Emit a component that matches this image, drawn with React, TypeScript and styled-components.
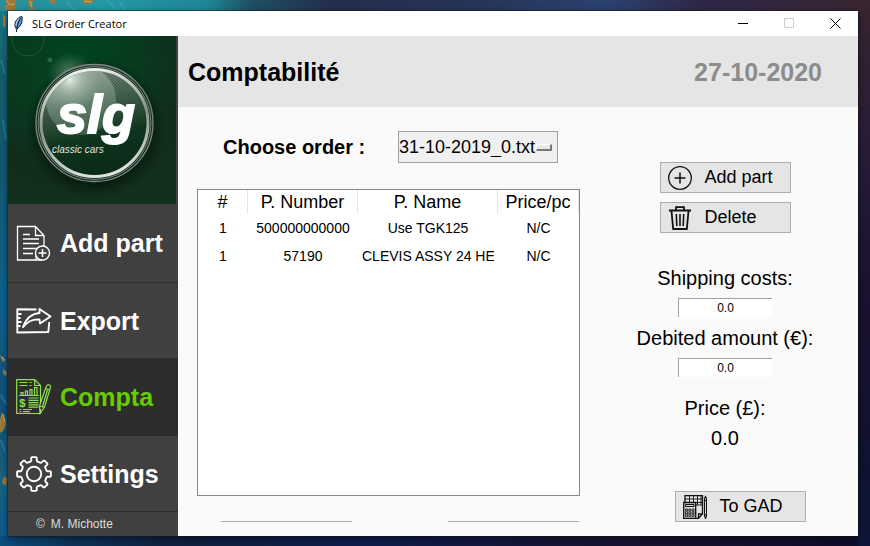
import React, { useState } from 'react';
import styled, { createGlobalStyle } from 'styled-components';

const GlobalStyle = createGlobalStyle`
  *, *::before, *::after { box-sizing: border-box; }
  body {
    margin: 0;
    font-family: "Liberation Sans", Arial, sans-serif;
    color: #000;
  }
  button, input, select { font: inherit; color: inherit; margin: 0; }
`;

/* ---------- desktop and window frame ---------- */

const Desktop = styled.div`
  position: relative;
  display: flex;
  min-height: 100vh;
  padding: 11px 12px 10px 8px;
  background:
    linear-gradient(180deg, transparent 60%, #0d1638 100%) right / 12px 100% no-repeat,
    linear-gradient(180deg, #38252f 0%, #2a1d38 25%, #1a1230 55%, #120e28 100%) right / 12px 100% no-repeat,
    linear-gradient(90deg, #2b8f98 0%, #249aa4 12%, #1f8796 24%, #1f4f62 29%, #232f4c 38%, #27355a 55%, #2c426f 70%, #30284a 80%, #38252f 100%) top / 100% 11px no-repeat,
    linear-gradient(90deg, #0b4f80 0%, #0c3358 8%, #10203f 20%, #0d1c4c 42%, #14163a 60%, #17122e 75%, #0e0c2a 100%) bottom / 100% 10px no-repeat,
    linear-gradient(180deg, #1c7f8c 0%, #15606e 12%, #135a74 30%, #0f6490 55%, #12507a 75%, #1a6482 88%, #0b5a94 100%);
`;

const Speckles = styled.svg`
  position: absolute;
  top: 0;
  left: 0;
  pointer-events: none;
`;

const Window = styled.div`
  position: relative;
  flex: 1;
  display: flex;
  flex-direction: column;
  min-width: 0;
  background: #fafafa;
  box-shadow: 0 0 0 1px rgba(20, 24, 30, 0.45), 0 2px 8px rgba(0, 0, 0, 0.5);
`;

const TitleBar = styled.div`
  display: flex;
  align-items: center;
  height: 25px;
  padding-left: 3px;
  background: #fff;
`;

const WindowTitle = styled.span`
  flex: 1;
  padding-left: 5px;
  font-family: "Open Sans", "Noto Sans", sans-serif;
  font-size: 11px;
  line-height: 24px;
`;

const WindowButton = styled.button`
  display: flex;
  align-items: center;
  justify-content: center;
  width: 46px;
  height: 25px;
  padding: 0;
  border: 0;
  background: none;
`;

const Columns = styled.div`
  flex: 1;
  display: flex;
`;

/* ---------- sidebar ---------- */

const Sidebar = styled.aside`
  display: flex;
  flex-direction: column;
  flex: none;
  width: 170px;
  background: #404040;
`;

const Nav = styled.nav`
  flex: 1;
  display: grid;
  grid-template-rows: 79fr 76fr 77fr 76fr;
`;

const NavButton = styled.button<{ $active?: boolean }>`
  display: flex;
  align-items: center;
  gap: 8px;
  padding: 0 0 0 8px;
  border: 0;
  border-bottom: 1px solid #2d2d2d;
  background: ${(p) => (p.$active ? '#2d2d2d' : '#404040')};
  color: ${(p) => (p.$active ? '#66cc00' : '#fff')};
  font-size: 25px;
  font-weight: bold;
  line-height: 28px;
  text-align: left;
  white-space: nowrap;
`;

const Credit = styled.footer`
  display: flex;
  gap: 6px;
  padding-left: 28px;
  color: #dcdcdc;
  font-size: 12px;
  line-height: 24px;
`;

/* ---------- main area ---------- */

const Main = styled.main`
  flex: 1;
  display: flex;
  flex-direction: column;
  min-width: 0;
`;

const Header = styled.header`
  display: flex;
  align-items: center;
  justify-content: space-between;
  height: 71px;
  padding: 2px 36px 0 10px;
  background: #e5e5e5;
  font-size: 25px;
`;

const Heading = styled.h1`
  margin: 0;
  font-size: inherit;
`;

const Today = styled.time`
  color: #8c8c8c;
  font-weight: bold;
`;

const Body = styled.div`
  flex: 1;
  display: grid;
  grid-template-columns: 383fr 278fr;
  padding: 24px 0 14px 19px;
`;

const Orders = styled.section`
  display: flex;
  flex-direction: column;
  min-width: 0;
`;

const ChooseRow = styled.div`
  display: flex;
  align-items: center;
  justify-content: space-between;
  padding: 0 22px 0 26px;
`;

const ChooseLabel = styled.label`
  font-size: 20px;
  font-weight: bold;
`;

const SelectBox = styled.div`
  position: relative;
  width: 160px;
  &::after {
    content: '';
    position: absolute;
    right: 6px;
    top: 13px;
    width: 16px;
    height: 7px;
    border: 1px solid #fff;
    border-right: 2px solid #777;
    border-bottom: 2px solid #777;
    background: #e8e8e8;
    pointer-events: none;
  }
`;

const Select = styled.select`
  appearance: none;
  display: block;
  width: 100%;
  height: 32px;
  padding: 0 20px 0 0;
  border: 1px solid #a0a0a0;
  border-radius: 0;
  background: #f0f0f0;
  font-size: 18px;
`;

const TableFrame = styled.div`
  flex: 1;
  margin: 26px 0 25px;
  border: 1px solid #828790;
  background: #fff;
`;

const Table = styled.table`
  width: 100%;
  border-collapse: separate;
  border-spacing: 0;
  table-layout: fixed;
`;

const Col = styled.col<{ $width?: number }>`
  width: ${(p) => (p.$width ? `${p.$width}px` : 'auto')};
`;

const Th = styled.th`
  height: 24px;
  padding: 0;
  border-right: 1px solid #e5e5e5;
  font-size: 18px;
  font-weight: normal;
  line-height: 24px;
  white-space: nowrap;
`;

const Td = styled.td`
  height: 28px;
  padding: 0 4px;
  font-size: 14px;
  line-height: 28px;
  text-align: center;
`;

const CellText = styled.div`
  overflow: hidden;
  white-space: nowrap;
`;

const Rules = styled.div`
  display: flex;
  justify-content: space-between;
  padding: 0 1px 0 24px;
`;

const Rule = styled.div`
  width: 131px;
  height: 1px;
  background: #adadad;
`;

const Side = styled.section`
  display: flex;
  flex-direction: column;
  align-items: center;
  padding: 31px 0 0 12px;
`;

const ButtonStack = styled.div`
  display: grid;
  gap: 9px;
  margin-bottom: 33px;
`;

const ActionButton = styled.button`
  display: flex;
  align-items: center;
  gap: 13px;
  width: 131px;
  height: 31px;
  padding: 0 0 0 7px;
  border: 1px solid #adadad;
  background: #e5e5e5;
  font-size: 18px;
  white-space: nowrap;
`;

const ExportSlot = styled.div`
  margin-top: auto;
  padding-left: 30px;
`;

const Field = styled.div`
  display: flex;
  flex-direction: column;
  align-items: center;
  gap: 8px;
  margin-bottom: 9px;
`;

const FieldLabel = styled.label`
  font-size: 20px;
  line-height: 24px;
`;

const FieldInput = styled.input`
  width: 94px;
  height: 19px;
  padding: 0;
  border: 0 solid #a0a0a0;
  border-width: 1px 0 0 1px;
  background: #fff;
  font-size: 12px;
  text-align: center;
`;

const Total = styled.div`
  display: grid;
  gap: 6px;
  margin-top: 10px;
  font-size: 20px;
  line-height: 24px;
  text-align: center;
`;

/* ---------- drawings ---------- */

const Wallpaper = () => (
  <Speckles width="180" height="546" viewBox="0 0 180 546" aria-hidden="true">
    <g fill="#a07a3a">
      <path d="M5 0h11l-1 4 1 5-4 2-6-1-2-3 3-3z" />
      <path d="M28 0h5l-1 4 2 6-3 1-2-5z" />
      <path d="M49 0h5l3 3-5 1zM82 0h12l-2 3-8 1z" />
      <path d="M3 14l3 3-1 5 1 4-3 2v-7z" />
      <path d="M0 355l4 3 1 4-3-1zM3 369l4 3-1 4-3-2z" />
      <path d="M2 412l3 6 1 7-3 6-3 2v-14zM4 476l3 3-1 7-4-3z" />
    </g>
    <g stroke="#d8b56a" fill="none" opacity=".8">
      <path d="M7 1l3 4 5-1M30 1l2 6M84 1l8 1M1 357l4 3M3 414l2 8" />
    </g>
    <g stroke="#4cb8c0" fill="none" strokeWidth="2" opacity=".3">
      <path d="M66 1l8 9M108 0l8 10M120 2l4 8M1 60l4 14M3 120l3 20M1 395l5 9M1 440l4 12" />
    </g>
  </Speckles>
);

const FeatherIcon = () => (
  <svg width="16" height="18" viewBox="0 0 16 18" aria-hidden="true">
    <path d="M5.500 14C2.500 11 4 6 7 3.500 8.500 2 10 1.500 11 1.500c.5 3 0 6-1.500 8.500C8.500 12 7.500 13 5.500 14z" fill="#5b93d4" stroke="#172136" />
    <path d="M9.500 3C7 7 6 11 5.500 17" fill="none" stroke="#111" />
    <path d="M8.500 3C6 6 5 8 5 11" fill="none" stroke="#b8d4ee" />
  </svg>
);

const Logo = () => (
  <svg width="168" height="168" viewBox="0 0 168 168" role="img" aria-label="SLG classic cars">
    <defs>
      <radialGradient id="field" cx="40%" cy="15%" r="85%">
        <stop offset="0" stopColor="#00451f" />
        <stop offset=".45" stopColor="#083a1e" />
        <stop offset=".8" stopColor="#122c1a" />
        <stop offset="1" stopColor="#12301c" />
      </radialGradient>
      <linearGradient id="ball" x1=".35" y1="0" x2=".55" y2="1">
        <stop offset="0" stopColor="#74897a" />
        <stop offset=".35" stopColor="#3d5e48" />
        <stop offset=".65" stopColor="#10381f" />
        <stop offset="1" stopColor="#0a2c18" />
      </linearGradient>
      <linearGradient id="ring" x1=".3" y1="0" x2=".5" y2="1">
        <stop offset="0" stopColor="#f2f5f2" />
        <stop offset=".5" stopColor="#87918a" />
        <stop offset="1" stopColor="#dfe3df" />
      </linearGradient>
      <radialGradient id="flare">
        <stop offset="0" stopColor="#e4eee6" stopOpacity=".95" />
        <stop offset=".4" stopColor="#b9cbbb" stopOpacity=".55" />
        <stop offset="1" stopColor="#8fa894" stopOpacity="0" />
      </radialGradient>
      <radialGradient id="shade">
        <stop offset=".8" stopColor="#04140a" stopOpacity=".6" />
        <stop offset="1" stopColor="#04140a" stopOpacity="0" />
      </radialGradient>
      <linearGradient id="bubble" x1="0" y1="0" x2=".3" y2="1">
        <stop offset="0" stopColor="#c3d2c5" stopOpacity=".6" />
        <stop offset="1" stopColor="#7f9c86" stopOpacity=".35" />
      </linearGradient>
      <pattern id="weave" width="3" height="3" patternUnits="userSpaceOnUse">
        <path d="M0 3L3 0" stroke="#000" strokeOpacity=".2" />
      </pattern>
      <clipPath id="disc"><circle cx="86.500" cy="87" r="52" /></clipPath>
    </defs>
    <rect width="168" height="168" fill="url(#field)" />
    <circle cx="20" cy="4" r="16" fill="none" stroke="#2c6b42" strokeOpacity=".6" />
    <circle cx="42" cy="24" r="2.500" fill="#2f6040" />
    <circle cx="87" cy="92" r="70" fill="url(#shade)" />
    <circle cx="62" cy="39" r="23" fill="url(#flare)" opacity=".5" />
    <circle cx="86.500" cy="87" r="58.500" fill="#102a19" stroke="#7f8c83" strokeWidth="1.300" />
    <circle cx="86.500" cy="87" r="56.500" fill="none" stroke="#98a39b" strokeWidth=".8" />
    <circle cx="86.500" cy="87" r="53.500" fill="url(#ball)" stroke="url(#ring)" strokeWidth="3" />
    <g clipPath="url(#disc)">
      <circle cx="86.500" cy="87" r="52" fill="url(#weave)" />
      <circle cx="73" cy="64" r="35" fill="url(#bubble)" />
      <circle cx="62" cy="44" r="32" fill="url(#flare)" />
    </g>
    <g fill="#fff" fontFamily="'Liberation Sans', Arial, sans-serif" fontStyle="italic">
      <text x="49" y="97" fontSize="54" fontWeight="bold" stroke="#fff" strokeWidth="2">slg</text>
      <text x="44" y="117" fontSize="10" fill="#dfe6e0">classic cars</text>
    </g>
  </svg>
);

const AddPageIcon = () => (
  <svg width="36" height="36" viewBox="0 0 36 36" fill="none" stroke="currentColor" aria-hidden="true">
    <path d="M20 28.500V35H1.500V1.500h18l8.500 9V21M19.500 1.500v9H28M20 35h6" strokeWidth="1.300" />
    <path d="M7 9.500h7M7 14h16M7 18.500h16M7 23.500h15M7 28.500h10" strokeWidth="1.300" />
    <circle cx="26.500" cy="28" r="7" fill="#404040" strokeWidth="1.400" />
    <path d="M26.500 24v8M22.500 28h8" strokeWidth="1.500" />
  </svg>
);

const ShareIcon = () => (
  <svg width="36" height="26" viewBox="0 0 36 26" fill="none" stroke="currentColor" strokeWidth="1.900" strokeLinejoin="round" aria-hidden="true">
    <path d="M20.500 1.500L1.300 1.200v23.300l31-.5 1-10M1 6h4.500M1 10h3.500M1 14h4.500M1 18h3.500" />
    <path d="M7 19C10 11 15 5.500 23.500 5V1l11 7.500-10.500 7-.500-4C16 11 12 13.500 7 19z" />
  </svg>
);

const ReportIcon = () => (
  <svg width="36" height="36" viewBox="0 0 36 36" fill="none" stroke="#8fe055" strokeWidth="1.200" aria-hidden="true">
    <path d="M24.500 30v4.500H.7V.7h18l5.800 5.800V24M18.700.7v5.800h5.800" />
    <path d="M3.500 3.500h8M3.500 6.500h8M13.500 3.500h2M13.500 6.500h2M3 16.500h20" />
    <path d="M5 16v-2.500h2V16M9.500 16v-4h2v4M14 16v-5.500h2V16M18.500 16V8.500h2.500V16" />
    <path d="M12.500 19h10M12.500 21.300h10M12.500 23.600h10M12.500 25.900h10M12.500 28.200h10M3.500 30.500h2M7 30.500h9M3.500 32.700h2M7 32.700h7" />
    <path d="M30 8l1-1.500c1-1.500 4-.5 3.500 1.500l-.5 2-5.500 18-4.500 6.500-.5-7.500zM29.500 9.500l4.500 1.500M24 27l4.500 1.500M31.500 11l-5 16.500" />
    <text x="3.200" y="28" fontSize="11" fontWeight="bold" fill="#8fe055" stroke="none">$</text>
  </svg>
);

const gearPath = (() => {
  const points: string[] = [];
  for (let i = 0; i < 8; i += 1) {
    const mid = (i * Math.PI) / 4 - Math.PI / 2;
    [[-0.28, 12.9], [-0.2, 13.6], [-0.17, 16.4], [-0.12, 17], [0.12, 17], [0.17, 16.4], [0.2, 13.6], [0.28, 12.9]].forEach(([a, r]) => {
      points.push(`${(18 + r * Math.cos(mid + a)).toFixed(2)} ${(18 + r * Math.sin(mid + a)).toFixed(2)}`);
    });
  }
  return `M${points.join('L')}Z`;
})();

const GearIcon = () => (
  <svg width="36" height="36" viewBox="0 0 36 36" fill="none" stroke="currentColor" strokeWidth="1.900" strokeLinejoin="round" aria-hidden="true">
    <path d={gearPath} />
    <circle cx="18" cy="18" r="7.200" />
  </svg>
);

const PlusIcon = () => (
  <svg width="24" height="24" viewBox="0 0 24 24" fill="none" stroke="#111" aria-hidden="true">
    <circle cx="12" cy="12" r="11.300" strokeWidth="1.300" />
    <path d="M12 6.500v11M6.500 12h11" strokeWidth="1.500" />
  </svg>
);

const TrashIcon = () => (
  <svg width="24" height="24" viewBox="0 0 24 24" fill="none" stroke="#111" aria-hidden="true">
    <path d="M1 4.500h22M8 4V1.200h8V4" strokeWidth="1.800" />
    <path d="M3.500 5l1.700 18h13.600l1.700-18" strokeWidth="1.800" />
    <path d="M8.300 8l.5 12M12 8v12M15.700 8l-.5 12" strokeWidth="1.600" />
  </svg>
);

const LedgerIcon = () => (
  <svg width="24" height="24" viewBox="0 0 24 24" fill="none" stroke="#111" aria-hidden="true">
    <path d="M2 7V.7h17.500V19l-4 4.300H13M15.500 23v-4h4" strokeWidth="1.300" />
    <path d="M2 4h17M6.500 1v6M10.500 1v6M14.500 1v9M18 1v9M12 7.500h7M13 10h6" strokeWidth=".9" />
    <path d="M.7 7.500h12v15.800H.7z" strokeWidth="1.300" fill="#d6d6d6" />
    <path d="M2.500 9.500h8.500v2H2.500z" />
    <path d="M2.500 14h2v2h-2zM5.800 14h2v2h-2zM9.100 14h2v2h-2zM2.500 16.800h2v2h-2zM5.800 16.800h2v2h-2zM9.100 16.800h2v2h-2zM2.500 19.600h2v2h-2zM5.800 19.600h2v2h-2zM9.100 19.600h2v2h-2z" strokeWidth=".8" />
    <path d="M21.500 3.500L22.500 1.500l1 2V21l-1 2.500-1-2.500zM21.500 5.500h2M21.500 20h2" strokeWidth="1.100" />
  </svg>
);

/* ---------- page ---------- */

const sections = [
  { name: 'Add part', icon: <AddPageIcon /> },
  { name: 'Export', icon: <ShareIcon /> },
  { name: 'Compta', icon: <ReportIcon /> },
  { name: 'Settings', icon: <GearIcon /> },
];

const parts = [
  ['1', '500000000000', 'Use TGK125', 'N/C'],
  ['1', '57190', 'CLEVIS ASSY 24 HE', 'N/C'],
];

export default function App() {
  const [active, setActive] = useState('Compta');
  const [shipping, setShipping] = useState('0.0');
  const [debited, setDebited] = useState('0.0');

  return (
    <>
      <GlobalStyle />
      <Desktop>
        <Wallpaper />
        <Window>
          <TitleBar>
            <FeatherIcon />
            <WindowTitle>SLG Order Creator</WindowTitle>
            <WindowButton aria-label="Minimize">
              <svg width="11" height="11" viewBox="0 0 11 11"><path d="M0 5.500h10" stroke="#000" /></svg>
            </WindowButton>
            <WindowButton aria-label="Maximize" disabled>
              <svg width="11" height="11" viewBox="0 0 11 11"><path d="M.5.5h9v9h-9z" fill="none" stroke="#ccc" /></svg>
            </WindowButton>
            <WindowButton aria-label="Close">
              <svg width="11" height="11" viewBox="0 0 11 11"><path d="M.5.5l10 10M10.500.5l-10 10" stroke="#000" /></svg>
            </WindowButton>
          </TitleBar>
          <Columns>
            <Sidebar>
              <Logo />
              <Nav>
                {sections.map((s) => (
                  <NavButton key={s.name} $active={s.name === active} onClick={() => setActive(s.name)}>
                    {s.icon}
                    {s.name}
                  </NavButton>
                ))}
              </Nav>
              <Credit>
                <span>©</span>
                <span>M. Michotte</span>
              </Credit>
            </Sidebar>
            <Main>
              <Header>
                <Heading>Comptabilité</Heading>
                <Today dateTime="2020-10-27">27-10-2020</Today>
              </Header>
              <Body>
                <Orders>
                  <ChooseRow>
                    <ChooseLabel htmlFor="order">Choose order :</ChooseLabel>
                    <SelectBox>
                      <Select id="order">
                        <option>31-10-2019_0.txt</option>
                      </Select>
                    </SelectBox>
                  </ChooseRow>
                  <TableFrame>
                    <Table>
                      <colgroup>
                        <Col $width={50} />
                        <Col $width={110} />
                        <Col $width={140} />
                        <Col />
                      </colgroup>
                      <thead>
                        <tr>
                          <Th scope="col">#</Th>
                          <Th scope="col">P. Number</Th>
                          <Th scope="col">P. Name</Th>
                          <Th scope="col">Price/pc</Th>
                        </tr>
                      </thead>
                      <tbody>
                        {parts.map((row) => (
                          <tr key={row[1]}>
                            {row.map((cell, i) => (
                              <Td key={i}><CellText>{cell}</CellText></Td>
                            ))}
                          </tr>
                        ))}
                      </tbody>
                    </Table>
                  </TableFrame>
                  <Rules>
                    <Rule />
                    <Rule />
                  </Rules>
                </Orders>
                <Side>
                  <ButtonStack>
                    <ActionButton><PlusIcon />Add part</ActionButton>
                    <ActionButton><TrashIcon />Delete</ActionButton>
                  </ButtonStack>
                  <Field>
                    <FieldLabel htmlFor="shipping">Shipping costs:</FieldLabel>
                    <FieldInput id="shipping" value={shipping} onChange={(e) => setShipping(e.target.value)} />
                  </Field>
                  <Field>
                    <FieldLabel htmlFor="debited">Debited amount (€):</FieldLabel>
                    <FieldInput id="debited" value={debited} onChange={(e) => setDebited(e.target.value)} />
                  </Field>
                  <Total>
                    <span>Price (£):</span>
                    <output>0.0</output>
                  </Total>
                  <ExportSlot>
                    <ActionButton><LedgerIcon />To GAD</ActionButton>
                  </ExportSlot>
                </Side>
              </Body>
            </Main>
          </Columns>
        </Window>
      </Desktop>
    </>
  );
}
